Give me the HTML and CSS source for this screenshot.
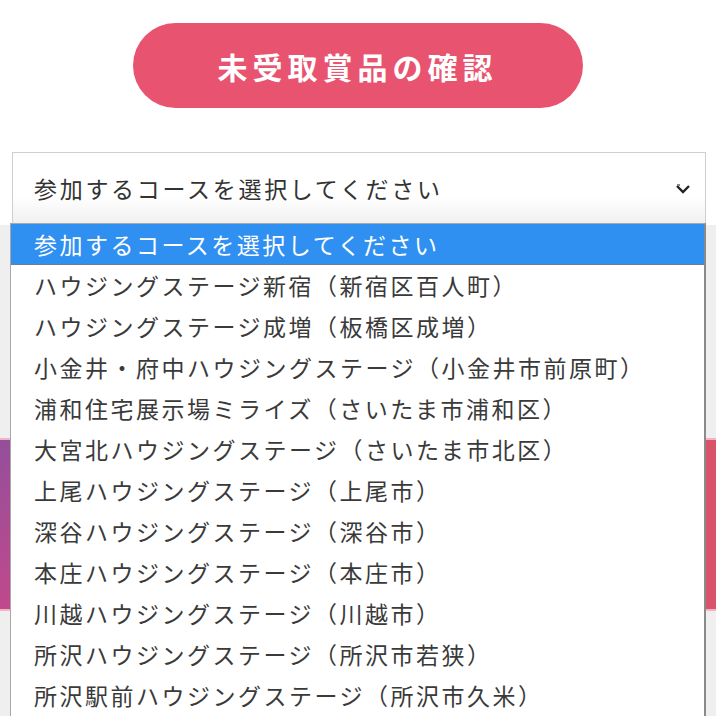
FILE: index.html
```html
<!DOCTYPE html>
<html lang="ja">
<head>
    <meta charset="UTF-8">
    <title>未受取賞品の確認</title>
    <link rel="stylesheet" href="styles.css">
</head>
<body>
    <div class="top">
        <button class="check-button">未受取賞品の確認</button>
    </div>

    <div class="select-area">
        <div class="course-select">
            <span class="select-label">参加するコースを選択してください</span>
            <svg class="select-arrow" width="14" height="10" viewBox="0 0 14 10">
                <path d="M1 2 L7 8 L13 2" fill="none" stroke="#222" stroke-width="2.4"/>
                <path d="M1 1 L4 1" stroke="#666" stroke-width="1.5"/>
            </svg>
        </div>
    </div>

    <div class="lower">
        <div class="banner"></div>
    </div>

    <!-- 開いたドロップダウン -->
    <ul class="course-list">
        <li class="course selected">参加するコースを選択してください</li>
        <li class="course">ハウジングステージ新宿（新宿区百人町）</li>
        <li class="course">ハウジングステージ成増（板橋区成増）</li>
        <li class="course">小金井・府中ハウジングステージ（小金井市前原町）</li>
        <li class="course">浦和住宅展示場ミライズ（さいたま市浦和区）</li>
        <li class="course">大宮北ハウジングステージ（さいたま市北区）</li>
        <li class="course">上尾ハウジングステージ（上尾市）</li>
        <li class="course">深谷ハウジングステージ（深谷市）</li>
        <li class="course">本庄ハウジングステージ（本庄市）</li>
        <li class="course">川越ハウジングステージ（川越市）</li>
        <li class="course">所沢ハウジングステージ（所沢市若狭）</li>
        <li class="course">所沢駅前ハウジングステージ（所沢市久米）</li>
    </ul>
</body>
</html>
```

FILE: styles.css
```css
body {
    margin: 0;
    height: 716px;
    overflow: hidden;
    position: relative;
    background: white;
    color: #333;
    font-family: "Noto Sans CJK JP", sans-serif;
}
.top {
    padding-top: 23px;
    display: flex;
    justify-content: center;
}
.check-button {
    width: 450px;
    height: 85px;
    border: none;
    border-radius: 43px;
    background: #e8546f;
    color: white;
    font-family: "Noto Sans CJK JP", sans-serif;
    font-size: 30px;
    font-weight: bold;
    letter-spacing: 5px;
    padding-left: 5px;
}
.select-area {
    margin-top: 44px;
    padding: 0 10px 0 12px;
}
.course-select {
    height: 71px;
    border: 1px solid #cfcfcf;
    background: linear-gradient(to bottom, #fff 60%, #f0f0f0);
    display: flex;
    align-items: center;
    justify-content: space-between;
    padding: 0 15px 0 21px;
}
.select-label {
    font-size: 23px;
    letter-spacing: 2.7px;
    margin-top: -2px;
}
.lower {
    height: 492px;
    background: #efefef;
    padding-top: 213px;
    box-sizing: border-box;
}
.banner {
    height: 173px;
    box-sizing: border-box;
    border-top: 2px solid #f4b3c4;
    border-bottom: 2px solid #f4b3c4;
    background: linear-gradient(135deg, #934f9a 0%, #c6488b 22%, #d9546b 60%);
}
.course-list {
    position: absolute;
    top: 223px;
    left: 10px;
    width: 696px;
    margin: 0;
    padding: 0;
    list-style: none;
    background: white;
    border: 1px solid #a8a8a8;
    border-right: 2px solid #8a8a8a;
    box-sizing: border-box;
}
.course {
    height: 41px;
    line-height: 40px;
    padding-left: 23px;
    font-size: 23px;
    letter-spacing: 2.5px;
    color: #3a3a3a;
    white-space: nowrap;
}
.course.selected {
    background: #2f90f2;
    color: white;
    border-bottom: 1px solid #6a7f94;
    height: 41px;
    box-sizing: border-box;
}
```
